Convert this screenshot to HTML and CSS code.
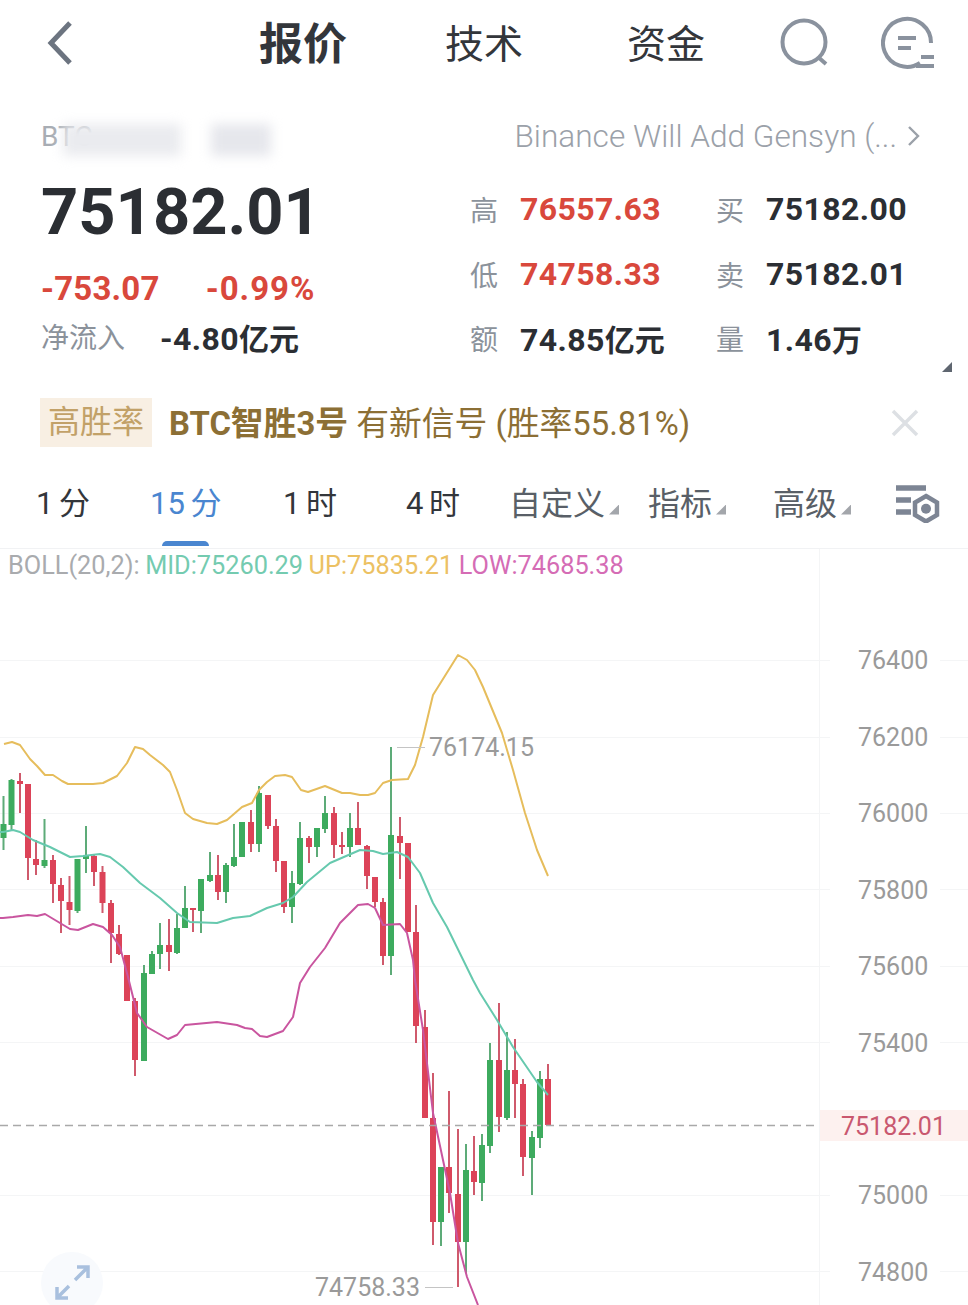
FILE: index.html
```html
<!DOCTYPE html>
<html lang="zh-CN">

<head>
    <meta charset="UTF-8">
    <meta name="viewport" content="width=device-width, initial-scale=1.0">
    <title>BTC 报价</title>
    <link rel="stylesheet" href="styles.css">
</head>

<body>
    <header class="nav">
        <svg class="nav-back" width="28" height="48" viewBox="0 0 28 48">
            <path d="M24 4 L5 24 L24 44" />
        </svg>
        <div class="nav-tabs">
            <span class="nav-tab nav-tab-active">报价</span>
            <span class="nav-tab">技术</span>
            <span class="nav-tab">资金</span>
        </div>
        <svg class="nav-icon" width="52" height="50" viewBox="0 0 52 50">
            <circle cx="24" cy="24" r="21.5" />
            <path d="M38 39 L46 46" />
        </svg>
        <svg class="nav-icon nav-icon-last" width="56" height="54" viewBox="0 0 56 54">
            <path d="M39 47 A24 24 0 1 1 50 27" />
            <path d="M17 22 H35 M17 32 H30 M40 41 H53 M35 50 H53" />
        </svg>
    </header>

    <div class="subhead">
        <div class="symbol">BTC<span class="symbol-blur"></span><span class="symbol-blur symbol-blur-b"></span></div>
        <div class="headline">Binance Will Add Gensyn (... <svg class="headline-arrow" width="14" height="24" viewBox="0 0 14 24"><path d="M2 3 L11 12 L2 21" /></svg></div>
    </div>

    <section class="quote">
        <div class="quote-main">
            <div class="last-price">75182.01</div>
            <div class="change">
                <span>-753.07</span>
                <span class="change-pct">-0.99%</span>
            </div>
            <div class="inflow">
                <span class="label">净流入</span>
                <span class="value">-4.80<span class="unit">亿元</span></span>
            </div>
        </div>
        <div class="stats">
            <span class="label">高</span><span class="value red">76557.63</span>
            <span class="label">买</span><span class="value">75182.00</span>
            <span class="label">低</span><span class="value red">74758.33</span>
            <span class="label">卖</span><span class="value">75182.01</span>
            <span class="label">额</span><span class="value">74.85<span class="unit">亿元</span></span>
            <span class="label">量</span><span class="value">1.46<span class="unit">万</span></span>
        </div>
        <span class="corner corner-quote"></span>
    </section>

    <div class="signal">
        <span class="signal-tag">高胜率</span>
        <span class="signal-text"><b>BTC智胜3号</b> 有新信号 (胜率55.81%)</span>
        <svg class="signal-close" width="30" height="30" viewBox="0 0 30 30">
            <path d="M3 3 L27 27 M27 3 L3 27" />
        </svg>
    </div>

    <nav class="periods">
        <span class="period">1 分</span>
        <span class="period period-active">15 分</span>
        <span class="period">1 时</span>
        <span class="period">4 时</span>
        <span class="period period-menu">自定义<span class="corner"></span></span>
        <span class="period period-menu">指标<span class="corner"></span></span>
        <span class="period period-menu">高级<span class="corner"></span></span>
        <svg class="period-settings" width="44" height="38" viewBox="0 0 44 38">
            <path class="bars" d="M0 3 H30 M0 15 H15 M0 27 H15" />
            <path class="nut" d="M30 11 L41 17.5 V30 L30 36.5 L19 30 V17.5 Z" />
            <circle cx="30" cy="23.7" r="5" />
        </svg>
    </nav>

    <main class="chart">
        <div class="legend">
            <span class="legend-boll">BOLL(20,2):</span>
            <span class="legend-mid">MID:75260.29</span>
            <span class="legend-up">UP:75835.21</span>
            <span class="legend-low">LOW:74685.38</span>
        </div>

        <svg class="chart-svg" width="968" height="756" viewBox="0 549 968 756">
            <!-- grid -->
            <path class="grid" d="M0 660.5H830M940 660.5H968M0 737.5H830M940 737.5H968M0 813.5H830M940 813.5H968M0 889.5H830M940 889.5H968M0 966.5H830M940 966.5H968M0 1042.5H830M940 1042.5H968M0 1195.5H830M940 1195.5H968M0 1271.5H830M940 1271.5H968M819.5 549V1305" />

            <!-- green wicks, red wicks, then bodies -->
            <path class="wick wick-green" d="M3.5 796V850M11.5 779V831M44.5 819V868M77.5 859V913M86 826V873M144 965V1061M152 951V974M160 923V969M177 914V954M185 886V928M201 879V933M210 852V882M226 863V903M234 824V867M242 822V857M259 786V852M292 871V923M300 822V885M317 828V857M325 796V833M350 813V857M391 747V975M441 1167V1246M466 1144V1273M482 1134V1201M490 1043V1153M507 1032V1120M532 1131V1195M540 1071V1148" />
            <path class="wick wick-red" d="M20 773V813M28 784V880M36 840V875M53 855V903M61 878V933M69.5 876V925M94 855V886M102.5 866V913M111 900V963M119 925V955M127 955V1001M135 998V1076M169 919V971M193 908V932M218 855V900M251 810V852M268 795V829M276 819V872M284 861V913M309 836V863M334 807V858M342 832V854M358 802V845M367 845V889M375 877V907M383 898V965M400 817V879M408 843V932M416 905V1043M425 1010V1118M433 1073V1245M449 1091V1213M458 1129V1287M474 1136V1195M499 1003V1132M515 1039V1118M523 1079V1176M548 1064V1125" />
            <path class="body body-green" d="M3.5 824V838M11.5 780V825M44.5 860V866M77.5 859V911M86 856V859M144 973V1061M152 954V974M160 945V954M177 928V953M185 908V928M201 879V911M210 875V881M226 865V892M234 857V866M242 822V857M259 793V844M292 883V907M300 838V884M317 828V847M325 813V829M350 828V847M391 835V956M441 1167V1222M466 1170V1242M482 1145V1183M490 1060V1146M507 1070V1118M532 1137V1158M540 1079V1138" />
            <path class="body body-red" d="M20 781V784M28 784V858M36 859V865M53 860V884M61 885V901M69.5 902V910M94 856V872M102.5 872V903M111 903V933M119 934V954M127 955V1001M135 1001V1060M169 945V952M193 908V910M218 875V892M251 822V844M268 795V826M276 826V861M284 861V907M309 838V847M334 813V845M342 845V847M358 828V845M367 846V876M375 877V902M383 902V956M400 836V843M408 843V932M416 932V1026M425 1027V1118M433 1118V1222M449 1167V1193M458 1194V1242M474 1171V1182M499 1060V1117M515 1070V1084M523 1084V1157M548 1079V1125" />

            <!-- bollinger bands -->
            <polyline class="band band-up" points="4,744 12,742 20,745 30,759 37,766 45,775 53,775 62,781 68,784 93,784 103,783 117,776 127,763 135,747 143,749 150,755 163,765 170,772 177,790 185,813 193,819 207,823 217,824 227,820 242,807 252,803 259,790 267,782 275,776 285,775 292,777 301,790 308,792 325,786 342,793 350,793 360,795 368,795 375,793 383,783 392,780 408,779 415,765 423,737 433,695 458,655 467,660 475,670 483,687 502,733 513,770 525,813 537,850 548,876" />
            <polyline class="band band-mid" points="0,832 3,832 13,830 20,832 33,840 50,847 70,857 83,856 100,854 110,857 123,867 140,883 160,898 177,913 190,922 217,923 233,918 250,916 267,908 283,903 293,897 307,882 330,863 360,850 373,851 383,854 397,852 408,857 420,873 433,903 447,927 473,980 480,993 497,1020 513,1047 537,1082 548,1095" />
            <polyline class="band band-low" points="0,918 3,918 13,917 28,915 37,916 45,914 55,920 70,929 78,930 93,924 103,927 112,935 120,947 128,977 137,1013 147,1027 168,1039 177,1035 185,1025 217,1022 237,1025 245,1028 252,1029 260,1036 267,1037 283,1031 293,1017 300,983 310,967 325,948 340,923 358,905 368,904 375,908 383,925 400,924 407,933 413,960 415,980 423,1030 433,1113 450,1193 458,1243 467,1277 478,1305" />

            <!-- last price -->
            <path class="last-line" d="M0 1125.5H819" />
            <rect class="last-box" x="820" y="1110" width="148" height="31" />
            <text class="last-text" x="841" y="1135">75182.01</text>

            <!-- high / low markers -->
            <path class="marker-line" d="M397 747.5H425M425 1287.5H453" />
            <text class="marker-text" x="429" y="756">76174.15</text>
            <text class="marker-text" x="315" y="1296">74758.33</text>

            <!-- axis -->
            <text class="axis-text" x="858" y="669">76400</text>
            <text class="axis-text" x="858" y="746">76200</text>
            <text class="axis-text" x="858" y="822">76000</text>
            <text class="axis-text" x="858" y="899">75800</text>
            <text class="axis-text" x="858" y="975">75600</text>
            <text class="axis-text" x="858" y="1052">75400</text>
            <text class="axis-text" x="858" y="1204">75000</text>
            <text class="axis-text" x="858" y="1281">74800</text>
        </svg>

        <svg class="expand" width="64" height="64" viewBox="0 0 64 64">
            <circle cx="32" cy="32" r="31" />
            <path d="M35 29 L47 17 M37 16 H48 V27 M29 35 L18 46 M17 36 V47 H28" />
        </svg>
    </main>
</body>
</html>
```

FILE: styles.css
```css
* {
    box-sizing: border-box;
}

html,
body {
    margin: 0;
    padding: 0;
    height: 1305px;
    overflow: hidden;
}

body {
    font-family: Roboto, "Noto Sans CJK SC", sans-serif;
    background-color: #ffffff;
    color: #2b2e33;
}

.nav {
    display: flex;
    align-items: center;
    height: 86px;
    padding-left: 46px;
}

.nav-back {
    flex: none;
    fill: none;
    stroke: #6c7480;
    stroke-width: 5;
}

.nav-tabs {
    flex: none;
    display: flex;
    align-items: center;
    margin-left: 185px;
    padding-bottom: 4px;
}

.nav-tab {
    font-size: 39px;
    margin-right: 104px;
    color: #33363b;
    white-space: nowrap;
}

.nav-tab:last-child {
    margin-right: 75px;
}

.nav-tab-active {
    font-size: 44px;
    font-weight: 700;
    margin-right: 98px;
}

.nav-icon {
    flex: none;
    fill: none;
    stroke: #8a929e;
    stroke-width: 4;
}

.nav-icon-last {
    margin-left: 49px;
}

.subhead {
    display: flex;
    justify-content: space-between;
    align-items: center;
    height: 52px;
    margin-top: 24px;
    padding: 0 47px 0 41px;
    color: #a0a6ae;
    font-size: 28px;
}

.symbol {
    position: relative;
    color: #a8adb4;
}

.symbol-blur {
    position: absolute;
    left: 22px;
    top: 4px;
    width: 118px;
    height: 32px;
    background-color: #eaebef;
    filter: blur(6px);
}

.symbol-blur-b {
    left: 170px;
    width: 60px;
    background-color: #e6e7ec;
}

.headline {
    display: flex;
    align-items: center;
    gap: 10px;
    color: #9ba1a9;
    font-size: 31.6px;
    font-weight: 300;
    white-space: nowrap;
}

.headline-arrow {
    fill: none;
    stroke: #9ba1a9;
    stroke-width: 2.4;
}

.quote {
    position: relative;
    display: flex;
    height: 226px;
    padding-left: 41px;
}

.quote-main {
    width: 429px;
    padding-top: 14px;
}

.last-price {
    font-size: 65px;
    font-weight: 700;
    line-height: 72px;
    color: #2b2e33;
}

.change {
    display: flex;
    gap: 46px;
    margin-top: 21px;
    font-size: 33px;
    line-height: 40px;
    font-weight: 700;
    letter-spacing: 0.2px;
    color: #d9483c;
}

.change-pct {
    letter-spacing: 1px;
}

.inflow {
    display: flex;
    gap: 35px;
    margin-top: 10px;
    line-height: 40px;
}

.label {
    font-size: 28px;
    color: #8b929b;
}

.value {
    font-size: 32px;
    font-weight: 700;
    letter-spacing: 0.4px;
    color: #2b2e33;
    white-space: nowrap;
}

.unit {
    font-size: 30px;
    letter-spacing: 0;
}

.red {
    color: #d9483c;
}

.stats {
    display: grid;
    grid-template-columns: 50px 196px 50px auto;
    grid-auto-rows: 64.5px;
    align-items: center;
    margin-top: 15px;
    height: 194px;
}

.corner {
    display: inline-block;
    width: 10px;
    height: 10px;
    background-color: #a3a6ab;
    clip-path: polygon(100% 0, 100% 100%, 0 100%);
}

.corner-quote {
    position: absolute;
    left: 942px;
    top: 200px;
    background-color: #5f6670;
}

.signal {
    display: flex;
    align-items: center;
    height: 49px;
    margin-top: 10px;
    padding-left: 40px;
    font-size: 32.8px;
}

.signal-tag {
    height: 49px;
    line-height: 49px;
    padding: 0 8px;
    background-color: #f8efe3;
    color: #c2a168;
    font-size: 32px;
}

.signal-text {
    margin-left: 17px;
    padding-bottom: 4px;
    color: #8c6f35;
    width: 721px;
    white-space: nowrap;
}

.signal-close {
    fill: none;
    stroke: #dde0e4;
    stroke-width: 3.5;
}

.periods {
    display: grid;
    grid-template-columns: 114px 133px 123px 104px 139px 125px 122px auto;
    align-items: center;
    height: 79px;
    margin-top: 23px;
    padding: 0 0 10px 36px;
    border-bottom: 1px solid #f1f2f4;
    position: relative;
}

.period {
    position: relative;
    padding-bottom: 7px;
    font-size: 31px;
    word-spacing: -2px;
    color: #33363b;
    white-space: nowrap;
}

.period-active {
    color: #4a86d0;
}

.period-active::after {
    content: "";
    position: absolute;
    left: 12px;
    top: 63px;
    width: 47px;
    height: 5px;
    background-color: #4a86d0;
    border-radius: 5px 5px 0 0;
}

.period-menu {
    color: #595f67;
    font-size: 32px;
    margin-left: -1px;
}

.period-menu .corner {
    margin-left: 4px;
}

.period-settings {
    display: block;
}

.period-settings .bars {
    fill: none;
    stroke: #7d8594;
    stroke-width: 5.5;
}

.period-settings .nut {
    fill: #ffffff;
    stroke: #7d8594;
    stroke-width: 4.5;
}

.period-settings circle {
    fill: #7d8594;
}

.chart {
    position: relative;
    height: 756px;
}

.chart-svg {
    display: block;
}

.legend {
    position: absolute;
    left: 8px;
    top: 0;
    display: flex;
    gap: 5.5px;
    font-size: 25.3px;
    line-height: 34px;
    white-space: nowrap;
}

.legend-boll {
    color: #a9abae;
}

.legend-mid {
    color: #74cbb0;
}

.legend-up {
    color: #ecc163;
}

.legend-low {
    color: #d56cb5;
}

.grid {
    fill: none;
    stroke: #f4f5f6;
    stroke-width: 1;
}

.wick {
    fill: none;
    stroke-width: 2;
}

.body {
    fill: none;
    stroke-width: 6;
}

.wick-green {
    stroke: #5dab78;
}

.body-green {
    stroke: #3dab5e;
}

.wick-red {
    stroke: #cf5a6c;
}

.body-red {
    stroke: #dc4358;
}

.band {
    fill: none;
    stroke-width: 2;
    stroke-linejoin: round;
}

.band-up {
    stroke: #e6bd5c;
}

.band-mid {
    stroke: #66c9ae;
}

.band-low {
    stroke: #c9559f;
}

.last-line {
    fill: none;
    stroke: #a9a9a9;
    stroke-width: 1.4;
    stroke-dasharray: 8 5;
}

.last-box {
    fill: #fdf1ef;
}

.last-text {
    fill: #c9586f;
    font-size: 25px;
}

.marker-line {
    fill: none;
    stroke: #c4c4c4;
    stroke-width: 1;
}

.marker-text,
.axis-text {
    fill: #9a9a9a;
    font-size: 25px;
}

.expand {
    position: absolute;
    left: 40px;
    top: 702px;
}

.expand circle {
    fill: #f8fafd;
}

.expand path {
    fill: none;
    stroke: #a9c0de;
    stroke-width: 3.5;
}
```
